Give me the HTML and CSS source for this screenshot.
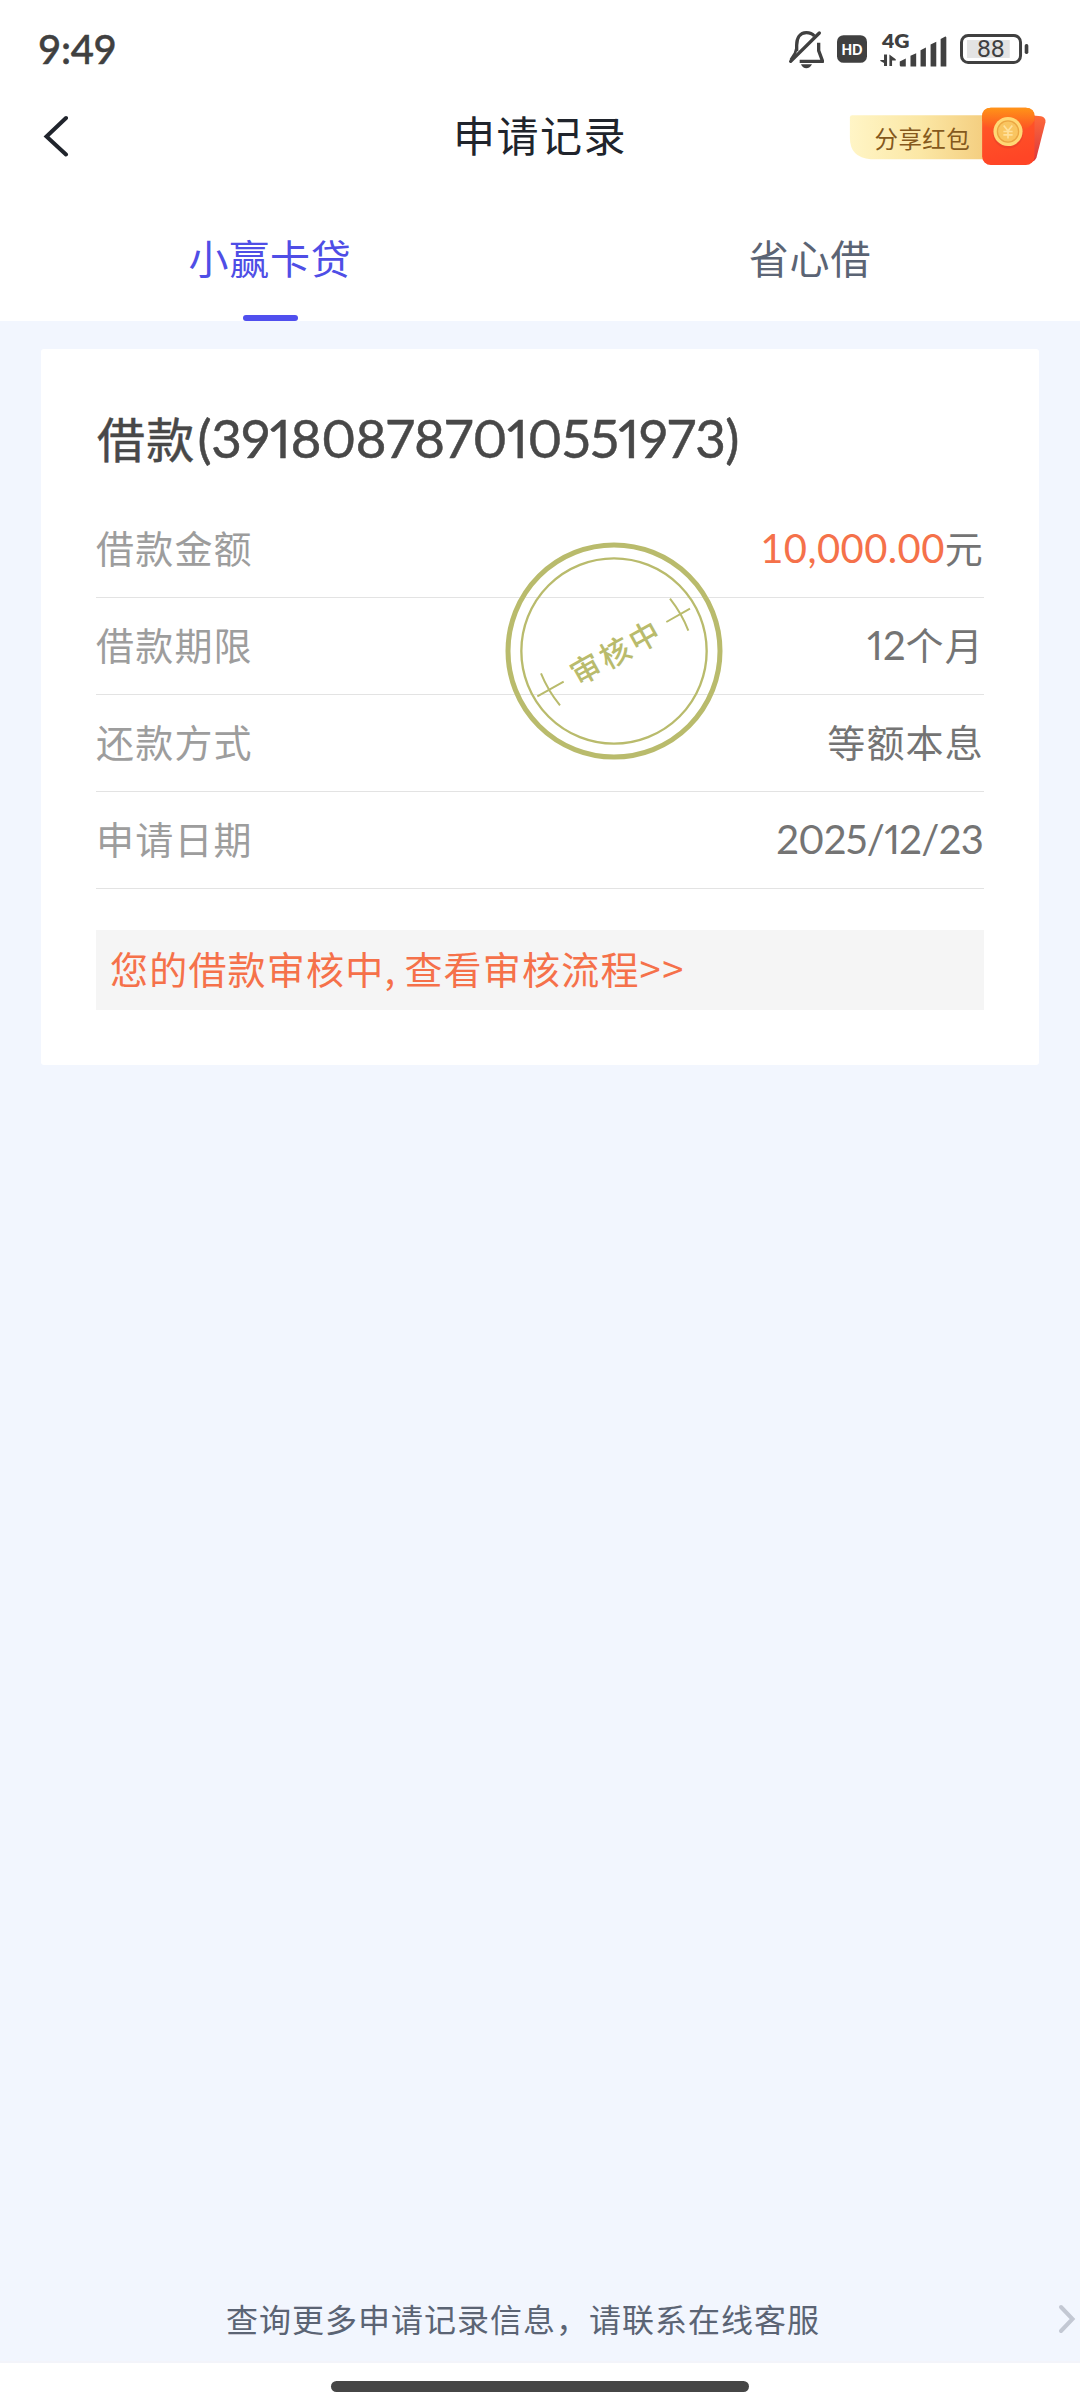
FILE: index.html
```html
<!DOCTYPE html>
<html lang="zh-CN">
<head>
<meta charset="utf-8">
<title>申请记录</title>
<link rel="stylesheet" href="styles.css">
</head>
<body>
<div class="screen">
  <div class="status">
    <span class="time">9:49</span>
    <div class="status-icons">
      <svg class="bell" viewBox="84 57 108 120" fill="none" stroke="#404040">
        <path d="M110 124V106C110 84 120 68 139 68C151 68 158 72 163 78" stroke-width="10"/>
        <path d="M176 98V122L188 154H119" stroke-width="10" stroke-linejoin="round"/>
        <path d="M92 154L178 69" stroke-width="10" stroke-linecap="round"/>
        <path d="M110 112L105 130L92 150" stroke-width="8"/>
        <path d="M123 163H156C152 171 146 175 139 175S126 171 123 163Z" fill="#404040" stroke="none"/>
      </svg>
      <svg class="hd" viewBox="231 75 91 84">
        <rect x="231" y="75" width="91" height="84" rx="20" fill="#404040"/>
        <text x="276.500" y="134" class="hd-text" textLength="64" lengthAdjust="spacingAndGlyphs">HD</text>
      </svg>
      <svg class="signal" viewBox="358 46 200 134" fill="#404040">
        <text x="364" y="110" class="net-text" textLength="82" lengthAdjust="spacingAndGlyphs">4G</text>
        <path d="M379 128V162H370V153L359 147V144H370V128ZM386 128L405 142V146H394V162H386Z"/>
        <path d="M417 149L435 140V164H421Q417 164 417 160ZM449 132L466 124V164H449ZM479 115L495 107V164H479ZM509 98L526 90V164H509ZM539 82L553 74Q556 74 556 77V164H539Z"/>
      </svg>
      <svg class="battery" viewBox="600 72 208 90">
        <rect x="621" y="90" width="129" height="54" fill="#e3e3e3"/>
        <rect x="604.500" y="76.500" width="178" height="81" rx="20" fill="none" stroke="#404040" stroke-width="9"/>
        <rect x="795" y="102" width="11" height="30" rx="5" fill="#404040"/>
        <text x="693" y="142" class="battery-text" textLength="84" lengthAdjust="spacingAndGlyphs">88</text>
      </svg>
    </div>
  </div>

  <div class="nav">
    <svg class="back" viewBox="0 0 26 42" fill="none" stroke="#20242c" stroke-width="4" stroke-linecap="round"><path d="M23 3L3.500 21.500L23 39.500"/></svg>
    <h1 class="title">申请记录</h1>
    <svg class="share" viewBox="91 52 594 178">
      <defs>
        <linearGradient id="gold" x1="0" x2="1"><stop offset="0" stop-color="#fff5c6"/><stop offset=".5" stop-color="#fbe7a5"/><stop offset="1" stop-color="#f3cb7b"/></linearGradient>
        <linearGradient id="red" x1="0" y1="0" x2=".2" y2="1"><stop offset="0" stop-color="#ff8a1c"/><stop offset=".35" stop-color="#ff5427"/><stop offset="1" stop-color="#ff4526"/></linearGradient>
        <linearGradient id="flap" x1="0" y1="0" x2="0" y2="1"><stop offset="0" stop-color="#ff9418"/><stop offset="1" stop-color="#fd4a26"/></linearGradient>
        <linearGradient id="back-env" x1="0" y1="0" x2="0" y2="1"><stop offset="0" stop-color="#ff6a3a"/><stop offset="1" stop-color="#d9363e"/></linearGradient>
      </defs>
      <path d="M99 77H520V210H155Q92 205 92 145V84Q92 77 99 77Z" fill="url(#gold)"/>
      <path d="M630 76L669 80Q684 84 682 98L655 204Q650 216 638 218H620Z" fill="url(#back-env)"/>
      <rect x="491" y="54" width="158" height="173" rx="26" fill="url(#red)"/>
      <path d="M491 92V80Q491 54 517 54H623Q649 54 649 80V92Q635 120 600 128H540Q505 120 491 92Z" fill="url(#flap)"/>
      <circle cx="569" cy="131" r="46" fill="#d5382a" opacity=".35"/>
      <circle cx="569" cy="126" r="44" fill="#ffd875"/>
      <circle cx="569" cy="126" r="32" fill="#f9c560" stroke="#eba642" stroke-width="4"/>
      <path d="M556 108L569 124L582 108M569 124V147M555 126H583M555 136H583" fill="none" stroke="#ffe09a" stroke-width="5"/>
      <text x="166" y="175" class="share-text" textLength="288">分享红包</text>
    </svg>
  </div>

  <div class="tabs">
    <div class="tab active">小赢卡贷</div>
    <div class="tab">省心借</div>
  </div>

  <main class="content">
    <section class="card">
      <h2 class="loan"><span>借款</span><span class="loan-number">(391808787010551973)</span></h2>
      <div class="row"><span class="label">借款金额</span><span class="value"><span class="num amount">10,000.00</span>元</span></div>
      <div class="row"><span class="label">借款期限</span><span class="value"><span class="num">12</span>个月</span></div>
      <div class="row"><span class="label">还款方式</span><span class="value">等额本息</span></div>
      <div class="row"><span class="label">申请日期</span><span class="value"><span class="num date">2025/12/23</span></span></div>
      <div class="notice"><span>您的借款审核中</span><span class="comma">,</span><span>查看审核流程</span><span class="arrows">&gt;&gt;</span></div>
      <svg class="stamp" viewBox="75 66 654 654" fill="none" stroke="#b9bb6c">
        <circle cx="402" cy="393" r="318" stroke-width="15"/>
        <circle cx="402" cy="393" r="278" stroke-width="7"/>
        <path d="M570 236Q606 282 625 332M559 306L630 266M183 460Q204 512 240 556M172 529L251 485" stroke-width="6"/>
        <text x="406" y="432" class="stamp-text" transform="rotate(-29 406 400)" textLength="292">审核中</text>
      </svg>
    </section>
  </main>

  <footer class="support">
    <span class="support-text">查询更多申请记录信息，请联系在线客服</span>
    <svg class="chevron" viewBox="0 0 20 30" fill="none" stroke="#c3c8d3" stroke-width="4" stroke-linecap="round"><path d="M3 3L14.500 15L3 27"/></svg>
  </footer>
  <div class="home"><div class="home-bar"></div></div>
</div>
</body>
</html>
```
FILE: styles.css
```css
* { box-sizing: border-box; }

body {
  margin: 0;
  background: #fff;
  font-family: "Noto Sans CJK SC", sans-serif;
}

.screen {
  width: 1080px;
  height: 2408px;
  display: flex;
  flex-direction: column;
  overflow: hidden;
}

.status {
  height: 92px;
  padding: 6px 51px 0 38px;
  display: flex;
  align-items: center;
  justify-content: space-between;
}
.time {
  font: 500 40px/1 Lato, sans-serif;
  letter-spacing: -0.3px;
  color: #404040;
  -webkit-text-stroke: 0.5px #404040;
}
.status-icons { display: flex; align-items: center; gap: 13px; }
.bell { width: 36px; height: 40px; }
.hd { width: 30px; height: 28px; }
.signal { width: 67px; height: 45px; }
.battery { width: 69px; height: 30px; }
.hd-text { font: 900 44px Lato, sans-serif; fill: #fff; text-anchor: middle; }
.net-text { font: 800 58px Lato, sans-serif; }
.battery-text { font: 400 70px Roboto, sans-serif; fill: #404040; text-anchor: middle; }

.nav {
  height: 88px;
  padding: 0 43px;
  display: grid;
  grid-template-columns: 1fr auto 1fr;
  align-items: center;
}
.back { width: 26px; height: 42px; }
.title {
  margin: 0;
  padding-bottom: 4px;
  font-size: 42px;
  font-weight: 400;
  line-height: 60px;
  letter-spacing: 1.5px;
  color: #20242c;
}
.share { width: 198px; height: 59px; margin-right: -10px; justify-self: end; }
.share-text { font: 400 71px "Noto Sans CJK SC", sans-serif; fill: #85591c; }

.tabs { height: 141px; display: flex; }
.tab {
  flex: 1;
  display: flex;
  flex-direction: column;
  align-items: center;
  justify-content: space-between;
  padding-top: 47px;
  font-size: 40px;
  line-height: 60px;
  letter-spacing: 0.8px;
  color: #5b6474;
}
.tab.active { color: #4f4ee6; }
.tab.active::after {
  content: "";
  width: 55px;
  height: 6px;
  border-radius: 3px;
  background: #504fee;
}

.content { flex: 1; padding: 28px 41px; background: #f2f6fe; }
.card {
  position: relative;
  height: 716px;
  padding: 52px 55px 0;
  border-radius: 3px;
  background: #fff;
}
.loan {
  height: 100px;
  margin: 0;
  padding-left: 1px;
  display: flex;
  align-items: baseline;
  font-size: 48px;
  font-weight: 400;
  line-height: 72px;
  letter-spacing: 1.2px;
  color: #484848;
  -webkit-text-stroke: 0.5px #484848;
}
.loan-number {
  margin-left: 2px;
  font-family: Lato, sans-serif;
  font-size: 53px;
  font-variant-numeric: proportional-nums;
  letter-spacing: -0.4px;
}
.row {
  height: 97px;
  padding-bottom: 5px;
  border-bottom: 1px solid #e3e3e3;
  display: flex;
  align-items: center;
  justify-content: space-between;
  font-size: 38px;
  letter-spacing: 1.2px;
}
.label { color: #9d9d9d; }
.value { color: #747474; }
.num {
  font-family: Lato, sans-serif;
  font-size: 40px;
  font-variant-numeric: proportional-nums;
  letter-spacing: 0;
}
.amount {
  font-variant-numeric: tabular-nums;
  color: #f5714a;
  letter-spacing: 0.4px;
}
.date { margin-right: 1px; letter-spacing: -0.7px; }
.notice {
  height: 80px;
  margin-top: 41px;
  padding: 0 14px 5px;
  display: flex;
  align-items: center;
  background: #f5f5f5;
  color: #f5714a;
  font-size: 38px;
  letter-spacing: 1.2px;
}
.comma { width: 20px; }
.arrows { letter-spacing: 1.5px; }
.stamp {
  position: absolute;
  left: 464px;
  top: 193px;
  width: 218px;
  height: 218px;
}
.stamp-text {
  font: 500 91px "Noto Sans CJK SC", sans-serif;
  fill: #b9bb6c;
  stroke: none;
  text-anchor: middle;
}

.support {
  height: 88px;
  padding: 0 2px 0 226px;
  display: flex;
  align-items: center;
  justify-content: space-between;
  background: #f2f6fe;
  border-bottom: 2px solid #f3f4fa;
  color: #5b6474;
}
.support-text { font-size: 32px; letter-spacing: 1px; }
.chevron { width: 20px; height: 30px; margin-top: 2px; }
.home {
  height: 45px;
  padding-top: 18px;
  display: flex;
  justify-content: center;
  background: #fff;
}
.home-bar { width: 418px; height: 11px; border-radius: 6px; background: #464646; }
```
